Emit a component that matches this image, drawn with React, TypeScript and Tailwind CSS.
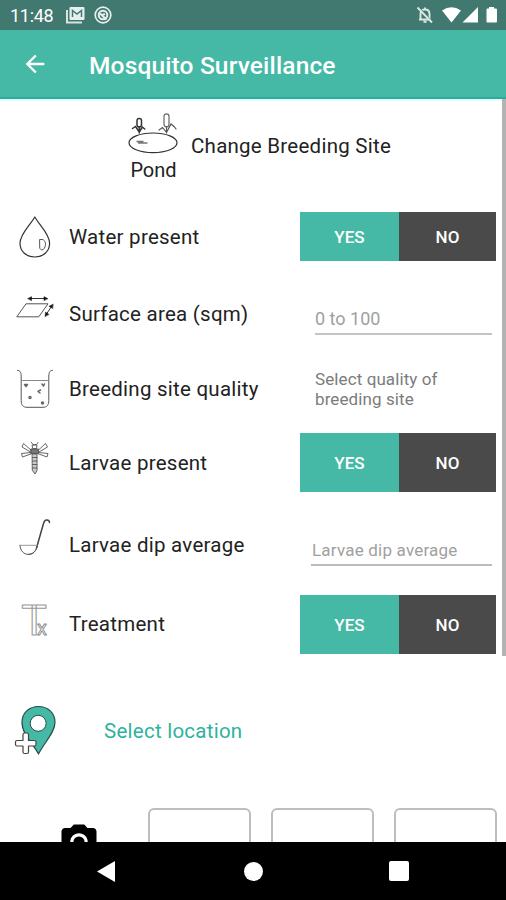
import type { ReactNode } from 'react'
import { MdArrowBack, MdPhotoCamera } from 'react-icons/md'

function IconBox({ children }: { children: ReactNode }) {
  return (
    <svg
      viewBox="0 0 40 48"
      className="ml-[15px] h-12 w-10 shrink-0 overflow-visible"
      fill="none"
      stroke="#333"
      strokeWidth="1"
      strokeLinecap="round"
      strokeLinejoin="round"
    >
      {children}
    </svg>
  )
}

function DropIcon() {
  return (
    <IconBox>
      <path d="M19.8 4C15 12.500 5 21 5 30.300C5 38.500 11.500 44 19.800 44S34.600 38.500 34.600 30.300C34.600 21 24.600 12.500 19.800 4Z" strokeWidth="1.200" />
      <path d="M25 26.500h2c2 0 3.500 2 3.500 4.800s-1.700 5.700-4 5.700l-1.500-1.500Z" stroke="#555" />
    </IconBox>
  )
}

function AreaIcon() {
  return (
    <IconBox>
      <path d="M2 26.500L11 13.800H33L24 26.500Z" stroke="#555" />
      <path d="M15 8.500H31" />
      <path d="M13 8.500l3.500-1.800v3.600ZM32.500 8.500L29 6.700v3.600Z" fill="#111" stroke="#111" strokeWidth=".6" />
      <path d="M36.500 16.500L31.500 24" />
      <path d="M38 14.200l-4 2 3.500 2.300ZM30 26.500l.5-4.500 3.400 2.300Z" fill="#111" stroke="#111" strokeWidth=".4" />
    </IconBox>
  )
}

function BeakerIcon() {
  return (
    <IconBox>
      <path d="M2.500 5.300C5.500 5.500 6 7.500 6.200 11V35.500C6.200 40 8 42.300 12 42.300H28C32 42.300 33.800 40 33.800 35.500V11C34 7.500 34.500 5.500 37.500 5.300" stroke="#555" />
      <path d="M6.500 15.500H33.500" stroke="#888" />
      <g stroke="#666" strokeWidth="1.500">
        <path d="M9.500 19.500l1.500 2 1.500-2zM27 19l1.500 2 1-2M25.500 25l-2.500 1.500 2 1.500" />
        <circle cx="15" cy="32.500" r="1" />
        <circle cx="27.500" cy="38" r="1" />
      </g>
    </IconBox>
  )
}

function LarvaIcon() {
  return (
    <IconBox>
      <g stroke="#555" strokeWidth=".9">
        <path d="M16.500 3.500l1.500 2.200h3.500L23 3.500M17.500 6h4.500l-.5 3.500h-3.500Z" />
        <path d="M16 10h7.500v4.500H16Z" fill="#777" />
        <path d="M16.500 11.500L8.500 4.500 7 8 15.500 13M16 13.500L6.500 14.500 7.500 18 17 14.500" />
        <path d="M23 11.500L30.500 4.500 32.500 8 24 13M23.500 13.500L33 14.500 32 18 22.500 14.500" />
        <path d="M17.500 15h4.500v16.500l-2 3.500-2.500-3.500Z" fill="#ccc" />
        <path d="M17.500 18.500h4.500M17.500 22h4.500M17.500 25.500h4.500M17.500 29h4.500" />
      </g>
    </IconBox>
  )
}

function LadleIcon() {
  return (
    <IconBox>
      <path d="M21.500 27L28.500 2.500C29.500-2 34-2 34.500 1.500" stroke="#444" strokeWidth="1.500" />
      <path d="M5 24.300C5.500 36.500 20.500 36.500 22.500 24.500M21.500 27C20 31.500 17.500 33.500 13.500 33.300" stroke="#555" />
      <path d="M5 24.300H22" stroke="#999" />
    </IconBox>
  )
}

function TreatmentIcon() {
  return (
    <IconBox>
      <text x="6.200" y="34.500" fontSize="43" fontFamily="Roboto, sans-serif" stroke="#999" strokeWidth="1.100">
        T
        <tspan x="22" fontSize="20" stroke="#888" strokeWidth=".9">
          x
        </tspan>
      </text>
    </IconBox>
  )
}

function PondIcon() {
  return (
    <svg viewBox="0 0 50 42" className="h-[42px] w-[50px]" fill="none" stroke="#333" strokeWidth="1.200" strokeLinecap="round">
      <ellipse cx="25" cy="30.800" rx="24" ry="9.800" />
      <path d="M9 29.500h6M10.500 31h8.500" stroke="#777" strokeWidth="1.400" />
      <rect x="9" y="6.500" width="4.500" height="8.500" rx="2.200" strokeWidth="1.500" />
      <path d="M11.300 15v6M11.300 20L7.500 14.500 4.500 16.500M11.300 20l3-5 2.500 2" strokeWidth="1.500" />
      <rect x="36" y="1.800" width="5" height="13" rx="2.500" stroke="#666" />
      <path d="M38.500 15v6M38.500 20.500L34.500 15.500 31 18M38.500 20.500L43 12l3 2.500 2 2.500" stroke="#555" />
    </svg>
  )
}

function PinIcon() {
  return (
    <svg viewBox="0 0 44 52" className="ml-[13px] h-[52px] w-11 shrink-0" strokeLinejoin="round">
      <path d="M25.500 49C21 40 9 29.500 9 17.500C9 8 16 1.500 25.500 1.500S42 8 42 17.500C42 27.500 31 38 25.500 49Z" fill="#46b9a6" stroke="#274d48" strokeWidth="1.200" />
      <circle cx="25.200" cy="18.300" r="8" fill="#fff" stroke="#274d48" strokeWidth="1" />
      <path
        d="M10 29.500q0-1.500 1.500-1.500h2.500q1.500 0 1.500 1.500v6h6q1.500 0 1.500 1.500v2.500q0 1.500-1.500 1.500h-6v6q0 1.500-1.500 1.500h-2.500q-1.500 0-1.500-1.500v-6h-6q-1.500 0-1.500-1.500v-2.500q0-1.500 1.500-1.500h6Z"
        fill="#fff"
        stroke="#444"
        strokeWidth="1.200"
      />
    </svg>
  )
}

function StatusBar() {
  return (
    <div className="flex h-[30px] items-center bg-[#41786f] pl-[10px] text-white">
      <span className="w-[55px] pt-px text-[18px] tracking-[-0.3px]">11:48</span>
      <svg viewBox="0 0 20 18" className="h-[18px] w-5">
        <path d="M2 4v12.500H17" fill="none" stroke="#d7e4e2" strokeWidth="2" />
        <path d="M5.500 1h13q1 0 1 1v11q0 1-1 1h-13q-1 0-1-1V2q0-1 1-1Z" fill="#e6efed" />
        <path d="M7.500 11V4.500l4.500 3.500 4.500-3.500V11" fill="none" stroke="#41786f" strokeWidth="1.500" />
      </svg>
      <svg viewBox="0 0 18 18" className="ml-[9px] h-[18px] w-[18px]" fill="none" stroke="#e6efed">
        <circle cx="9" cy="9" r="7.800" strokeWidth="1.700" />
        <circle cx="9" cy="9" r="4.300" strokeWidth="2" />
        <path d="M6 7.500l6.500 6M8 9l3-1" strokeWidth="2" />
      </svg>
      <svg viewBox="0 0 18 18" className="ml-auto h-[18px] w-[18px]" fill="none" stroke="#dbe7e5" strokeWidth="1.900">
        <path d="M4.500 13.500V8Q4.500 3.500 9 3.500T13.500 8v5.500H3M9 1.500v2M7.500 15.800h3" />
        <path d="M3 1.500L17 17" stroke="#41786f" strokeWidth="1.600" />
        <path d="M1.500 1.500L16 16.500" />
      </svg>
      <svg viewBox="0 0 56 18" className="mr-[8px] ml-[8px] h-[18px] w-14" fill="#fff">
        <path d="M0 4.500Q9.500-2 19 4.500L9.500 16.500Z" />
        <path d="M36 1v15.500H20.500Z" />
        <path d="M47 1h5v1.500h2q1 0 1 1v12q0 1-1 1h-8.500q-1 0-1-1v-12q0-1 1-1H47Z" />
      </svg>
    </div>
  )
}

function YesNo({ tall }: { tall?: boolean }) {
  return (
    <div
      className={
        (tall ? 'h-[59px]' : 'mb-[2px] h-[49px]') +
        ' mr-[10px] flex w-[196px] text-[17px] font-medium text-white'
      }
    >
      <button className="flex w-[99px] items-center justify-center bg-[#46b9a6] pt-[3px]">YES</button>
      <button className="flex flex-1 items-center justify-center bg-[#4a4a4a] pt-[3px]">NO</button>
    </div>
  )
}

const rows = [
  { label: 'Water present', height: 'h-[76px]', icon: <DropIcon />, field: <YesNo /> },
  {
    label: 'Surface area (sqm)',
    height: 'h-[77px]',
    icon: <AreaIcon />,
    field: (
      <div className="mt-[6px] mr-[14px] flex h-9 w-[177px] items-center border-b-2 border-[#c4c4c4] pt-[5px] text-[18px] text-[#a0a0a0]">
        0 to 100
      </div>
    ),
  },
  {
    label: 'Breeding site quality',
    height: 'h-[74px]',
    icon: <BeakerIcon />,
    field: (
      <div className="mr-[11px] mb-px w-[180px] text-[17px] leading-5 tracking-[0.1px] text-[#7c7c7c]">
        Select quality of
        <br />
        breeding site
      </div>
    ),
  },
  { label: 'Larvae present', height: 'h-[73px]', icon: <LarvaIcon />, field: <YesNo tall /> },
  {
    label: 'Larvae dip average',
    height: 'h-[91px]',
    icon: <LadleIcon />,
    field: (
      <div className="mt-[7px] mr-[14px] flex h-9 w-[181px] items-center border-b-2 border-[#bbb] pt-[7px] pl-px text-[17px] tracking-[0.2px] text-[#a0a0a0]">
        Larvae dip average
      </div>
    ),
  },
  { label: 'Treatment', height: 'h-[68px]', icon: <TreatmentIcon />, field: <YesNo tall /> },
]

export default function App() {
  return (
    <div className="flex h-[900px] w-[506px] flex-col overflow-hidden bg-white font-['Roboto',sans-serif] text-[#222]">
      <StatusBar />
      <header className="flex h-[69px] items-center border-b-2 border-[#25ae9a] bg-[#46b9a6] text-white">
        <MdArrowBack className="ml-[21px] h-7 w-7" />
        <h1 className="ml-[40px] pt-[5px] text-[24.5px] font-medium tracking-[0.15px]">Mosquito Surveillance</h1>
      </header>

      <main className="relative h-[743px] overflow-hidden">
        <div className="absolute top-0 right-0 h-[557px] w-1 bg-[#b3b3b3]" />

        <div className="flex h-[100px] items-start border-t-2 border-[#e6f8fb]">
          <div className="ml-[128px] flex w-[50px] flex-col items-center pt-[11px]">
            <PondIcon />
            <span className="mt-[4px] ml-px text-[20px] leading-6">Pond</span>
          </div>
          <span className="mt-[33px] ml-[13px] text-[20.5px] leading-6 tracking-[0.25px]">Change Breeding Site</span>
        </div>

        {rows.map((row) => (
          <div key={row.label} className={'flex items-center first-of-type:pt-0 ' + row.height}>
            {row.icon}
            <span className="ml-[14px] flex-1 text-[20.5px] leading-6 tracking-[0.25px] whitespace-nowrap">{row.label}</span>
            {row.field}
          </div>
        ))}

        <div className="flex h-[146px] items-center">
          <PinIcon />
          <span className="ml-[47px] pt-px text-[20.5px] tracking-[0.25px] text-[#2fb29d]">Select location</span>
        </div>

        <div className="flex items-start pt-[4px]">
          <MdPhotoCamera className="mt-[13px] ml-[58px] h-[42px] w-[42px] text-black" />
          <div className="ml-[48px] flex gap-[20px]">
            <div className="h-[100px] w-[103px] rounded-[6px] border-2 border-[#bdbdbd]" />
            <div className="h-[100px] w-[103px] rounded-[6px] border-2 border-[#bdbdbd]" />
            <div className="h-[100px] w-[103px] rounded-[6px] border-2 border-[#bdbdbd]" />
          </div>
        </div>
      </main>

      <nav className="flex h-[58px] items-center bg-black">
        <svg viewBox="0 0 18 21" className="ml-[97px] h-[21px] w-[18px]" fill="#fff">
          <path d="M0 10.500L18 0V21Z" />
        </svg>
        <div className="ml-[129px] h-[19px] w-[19px] rounded-full bg-white" />
        <div className="ml-[126px] h-5 w-5 rounded-[2px] bg-white" />
      </nav>
    </div>
  )
}
